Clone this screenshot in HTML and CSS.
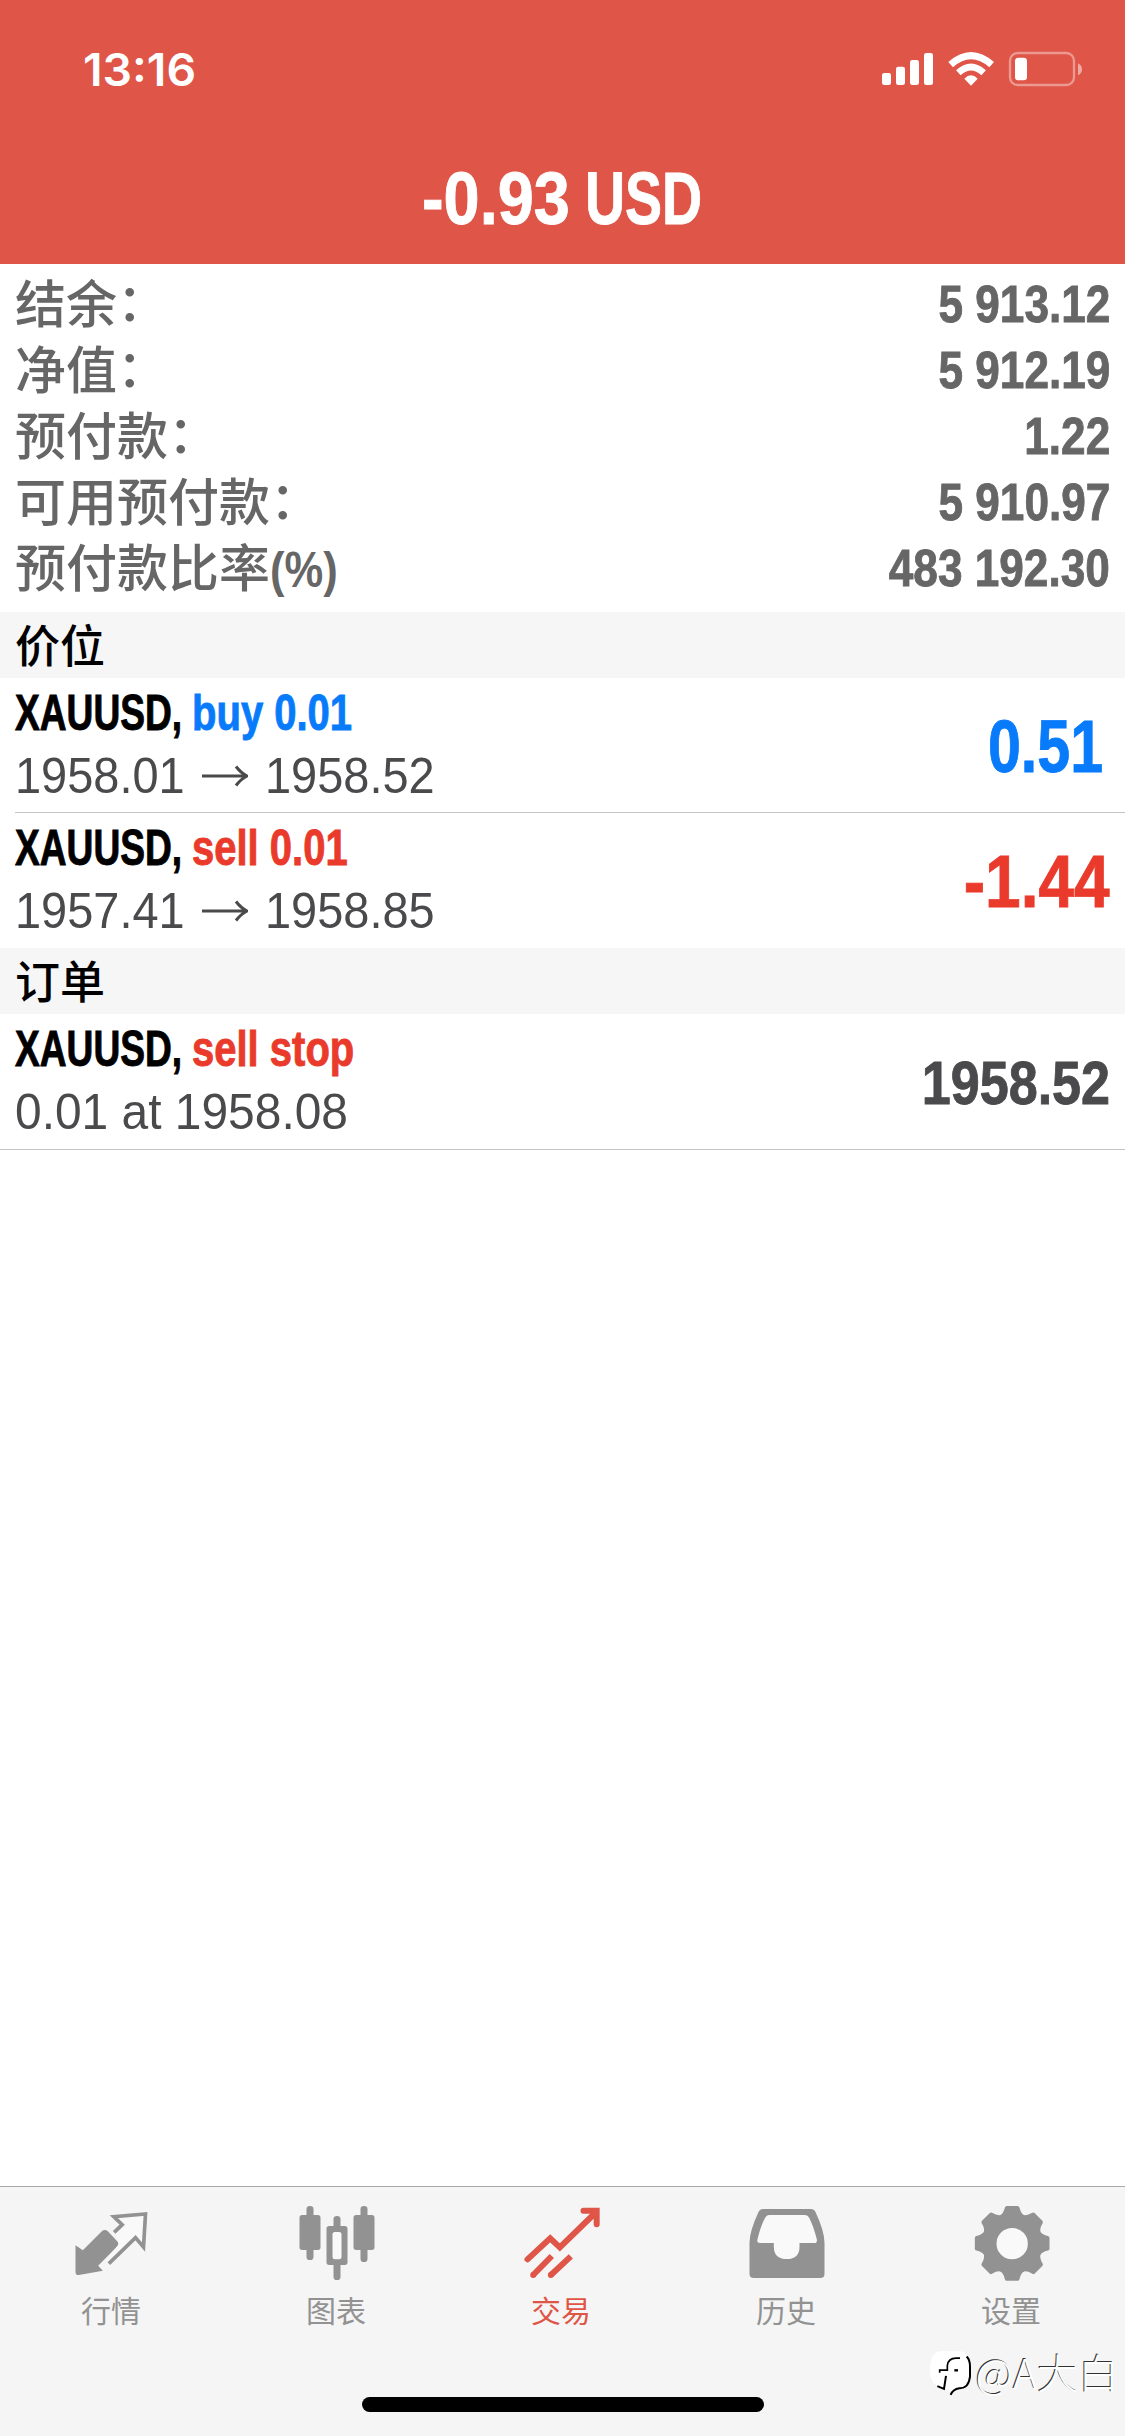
FILE: index.html
```html
<!DOCTYPE html>
<html lang="zh-CN">
<head>
<meta charset="utf-8">
<title>交易</title>
<link rel="stylesheet" href="styles.css">
</head>
<body>
<div class="app">
  <header class="header">
    <div class="status">
      <span class="time">13:16</span>
      <svg class="status-icons" viewBox="60 60 630 120" aria-hidden="true">
        <g fill="#fff">
          <rect x="66" y="129" width="27" height="36" rx="7"/>
          <rect x="108" y="110" width="27" height="55" rx="7"/>
          <rect x="150" y="90" width="27" height="75" rx="7"/>
          <rect x="192" y="69" width="27" height="96" rx="7"/>
          <path d="M333 167 L313 146 Q333 126 353 146 Z"/>
          <rect x="465" y="83" width="36" height="68" rx="10"/>
        </g>
        <g fill="none" stroke="#fff">
          <path d="M272 104 Q333 50 395 104" stroke-width="21"/>
          <path d="M295 128 Q333 94 371 128" stroke-width="20"/>
        </g>
        <rect x="450" y="69" width="192" height="96" rx="23" fill="none" stroke="#fff" stroke-opacity=".4" stroke-width="7"/>
        <path d="M654 100 Q666 106 666 118 Q666 130 654 136 Z" fill="#fff" fill-opacity=".5"/>
      </svg>
    </div>
    <h1 class="total"><span class="cond amount">-0.93</span><span class="cond currency">USD</span></h1>
  </header>

  <main class="content">
    <dl class="summary">
      <div class="line"><dt>结余<i>：</i></dt><dd class="cond">5 913.12</dd></div>
      <div class="line"><dt>净值<i>：</i></dt><dd class="cond">5 912.19</dd></div>
      <div class="line"><dt>预付款<i>：</i></dt><dd class="cond">1.22</dd></div>
      <div class="line"><dt>可用预付款<i>：</i></dt><dd class="cond">5 910.97</dd></div>
      <div class="line"><dt>预付款比率<span class="pct">(%)</span></dt><dd class="cond">483 192.30</dd></div>
    </dl>

    <h2 class="section">价位</h2>
    <article class="row first">
      <div class="info">
        <div class="name"><b class="symbol">XAUUSD,</b><b class="side buy">buy 0.01</b></div>
        <div class="prices"><span>1958.01</span><svg class="arrow" viewBox="0 0 46 22"><path d="M0 11H44M34 1.500Q39 8 45 11Q39 14 34 20.500"/></svg><span>1958.52</span></div>
      </div>
      <strong class="profit gain cond buy">0.51</strong>
    </article>
    <article class="row ruled">
      <div class="info">
        <div class="name"><b class="symbol">XAUUSD,</b><b class="side sell">sell 0.01</b></div>
        <div class="prices"><span>1957.41</span><svg class="arrow" viewBox="0 0 46 22"><path d="M0 11H44M34 1.500Q39 8 45 11Q39 14 34 20.500"/></svg><span>1958.85</span></div>
      </div>
      <strong class="profit loss cond sell">-1.44</strong>
    </article>

    <h2 class="section">订单</h2>
    <article class="row last">
      <div class="info">
        <div class="name"><b class="symbol">XAUUSD,</b><b class="side sell">sell stop</b></div>
        <div class="prices"><span class="order">0.01 at 1958.08</span></div>
      </div>
      <strong class="quote cond">1958.52</strong>
    </article>
  </main>

  <nav class="tabs">
    <a class="tab">
      <svg class="icon" viewBox="217.500 102 240 240">
        <path fill="currentColor" d="M225 226 L247 241 L304 184 Q313 176 322 184 L350 214 Q357 222 349 230 L293 287 L307 302 L235 315 Q225 316 225 305 Z"/>
        <path fill="#f9f9f9" d="M340 139 L436 131 L429 231 L405 203 L327 280 L317 270 L356 222 L344 190 L365 164 Z"/>
        <path fill="none" stroke="currentColor" stroke-width="11" d="M341 187 L365 164 L340 140 L435 132 L429 231 L405 203 L325 281"/>
      </svg>
      <span>行情</span>
    </a>
    <a class="tab">
      <svg class="icon" viewBox="892.500 102 240 240" fill="currentColor">
        <rect x="897" y="135" width="63" height="105" rx="8"/><rect x="918" y="108" width="21" height="162" rx="10"/>
        <rect x="1059" y="135" width="63" height="105" rx="8"/><rect x="1080" y="108" width="21" height="168" rx="10"/>
        <rect x="999" y="138" width="21" height="192" rx="10"/><rect x="978" y="168" width="63" height="117" rx="8"/>
        <rect x="996" y="186" width="27" height="82" rx="7" fill="#f9f9f9"/>
      </svg>
      <span>图表</span>
    </a>
    <a class="tab active">
      <svg class="icon" viewBox="367.500 102 240 240" fill="none" stroke="currentColor" stroke-width="18">
        <path stroke-linecap="round" d="M381 268 L449 205 L478 232 L584 129 M549 122 H588.500 V163"/>
        <path d="M398 315 L454 258 M451 315 L511 259"/>
        <g fill="currentColor" stroke="none"><circle cx="398" cy="315" r="9"/><circle cx="451" cy="315" r="9"/></g>
      </svg>
      <span>交易</span>
    </a>
    <a class="tab">
      <svg class="icon" viewBox="67.500 102 240 240">
        <path fill="currentColor" d="M113 117 H256 Q266 117 270 126 Q297 184 297 218 V311 Q297 324 284 324 H85 Q72 324 72 311 V218 Q72 184 99 126 Q103 117 113 117 Z"/>
        <path fill="#f9f9f9" d="M130 135 H239 Q247 135 251 143 Q264 168 274 208 Q276 219 266 219 H222 V230 Q222 267 184 267 Q145 267 145 230 V219 H104 Q93 219 96 208 Q105 168 119 143 Q123 135 130 135 Z"/>
      </svg>
      <span>历史</span>
    </a>
    <a class="tab">
      <svg class="icon" viewBox="742.500 102 240 240">
        <g fill="currentColor" stroke="currentColor" stroke-width="12" stroke-linejoin="round">
          <circle cx="860" cy="220" r="80"/>
          <path id="tooth" d="M826 142 Q839 135 844 114 H876 Q881 135 894 142 Z"/>
          <use href="#tooth" transform="rotate(45 860 220)"/><use href="#tooth" transform="rotate(90 860 220)"/>
          <use href="#tooth" transform="rotate(135 860 220)"/><use href="#tooth" transform="rotate(180 860 220)"/>
          <use href="#tooth" transform="rotate(225 860 220)"/><use href="#tooth" transform="rotate(270 860 220)"/>
          <use href="#tooth" transform="rotate(315 860 220)"/>
        </g>
        <circle cx="860" cy="221" r="47" fill="#f9f9f9"/>
      </svg>
      <span>设置</span>
    </a>
    <div class="home-bar"></div>
    <div class="watermark">
      <svg viewBox="612 548 126 140" aria-hidden="true">
        <path fill="#fff" d="M640 554 H705 Q733 560 733 600 V640 Q728 660 700 665 L674 685 L668 668 Q612 668 612 610 Q612 560 640 554 Z"/>
        <g fill="none" stroke="#000">
          <path stroke-width="5" d="M702 575 H690 Q667 575 664 597 V611 H641 V619"/>
          <path stroke-width="6" d="M660 628 L654 667 L634 659"/>
          <path stroke-width="6" d="M722 570 Q732 580 732 600 V630 Q728 666 700 665 Q680 668 674 685"/>
        </g>
        <rect x="685" y="608" width="11" height="7"/>
      </svg>
      <span>@A大白</span>
    </div>
  </nav>
</div>
</body>
</html>
```
FILE: styles.css
```css
* { box-sizing: border-box; margin: 0; padding: 0; }

body {
  width: 1125px;
  background: #fff;
  font-family: "Liberation Sans", "Noto Sans CJK SC", sans-serif;
}

.app {
  display: flex;
  flex-direction: column;
  height: 2436px;
  overflow: hidden;
}

/* Condensed bold numerals */
.cond {
  display: inline-block;
  font-weight: 700;
  white-space: nowrap;
  transform: scaleX(.841);
  transform-origin: 100% 50%;
  -webkit-text-stroke: .9px currentColor;
}

/* Header */
.header {
  height: 264px;
  background: #df5548;
  color: #fff;
}
.status {
  display: flex;
  justify-content: space-between;
  height: 136px;
  padding: 50px 35px 0 83px;
}
.time {
  font: 600 45px/40px Inter, sans-serif;
  transform: scaleX(1.03);
  transform-origin: 0 50%;
}
.status-icons { width: 210px; height: 40px; }
.total {
  display: flex;
  padding-left: 422px;
  font-size: 74.500px;
  line-height: 126px;
}
.total .cond { transform-origin: 0 50%; }
.total .amount { width: 163px; transform: scaleX(.87); }
.total .currency { transform: scaleX(.745); }

/* Account summary */
.summary { height: 348px; padding: 3px 15px 0; color: #666; }
.line {
  display: flex;
  justify-content: space-between;
  height: 66px;
}
.line dt {
  font: 500 51px/68px "Noto Sans CJK SC", sans-serif;
}
.line dt i {
  position: relative;
  top: -2px;
  font-style: normal;
}
.pct {
  display: inline-block;
  font: 700 50px/60px "Liberation Sans", sans-serif;
  transform: scaleX(.87);
  transform-origin: 0 50%;
}
.line dd {
  padding-top: 3px;
  font-size: 52.500px;
  line-height: 67px;
  height: 66px;
}

/* Lists */
.section {
  height: 66px;
  padding-left: 15px;
  background: #f6f6f6;
  color: #000;
  font: 500 45px/63px "Noto Sans CJK SC", sans-serif;
}
.row {
  display: flex;
  justify-content: space-between;
  height: 136px;
  padding-right: 15px;
}
.first { height: 134px; }
.info { display: flex; flex-direction: column; flex: 1; margin-left: 15px; }
.ruled { background: linear-gradient(#c4c4c6, #c4c4c6) 100% 0 / 1110px 1px no-repeat; }
.ruled .info { padding-top: 1px; }
.last { border-bottom: 1px solid #c4c4c6; }
.name {
  display: flex;
  height: 69px;
  font-size: 49.400px;
  line-height: 70px;
  white-space: nowrap;
}
.name b {
  transform: scaleX(.81);
  transform-origin: 0 50%;
  -webkit-text-stroke: .9px currentColor;
}
.name .symbol { width: 177px; color: #000; transform: scaleX(.752); }
.prices {
  display: flex;
  align-items: center;
  color: #4a4a4c;
  font-size: 49.400px;
  line-height: 58px;
  white-space: nowrap;
}
.prices span { transform: scaleX(.95); transform-origin: 0 50%; }
.prices span:first-child { width: 187px; }
.prices .order { transform: scaleX(.97); }
.arrow {
  width: 46px;
  height: 22px;
  margin-right: 17px;
  fill: none;
  stroke: currentColor;
  stroke-width: 3;
}
.buy { color: #087bfb; }
.sell { color: #e93a2b; }
.profit { font-size: 73.500px; line-height: 138px; }
.gain { margin-right: 7px; transform: scaleX(.805); }
.loss { line-height: 140px; transform: scaleX(.87); }
.quote { color: #4a4a4c; font-size: 62px; line-height: 138px; }

/* Tab bar */
.tabs {
  position: relative;
  display: flex;
  height: 250px;
  margin-top: auto;
  border-top: 1px solid #a9a9a9;
  background: #f5f5f5;
}
.content { flex: 1; }
.tab {
  display: flex;
  flex: 1;
  flex-direction: column;
  align-items: center;
  padding-top: 17px;
  color: #929292;
  font: 400 30px/44px "Noto Sans CJK SC", sans-serif;
}
.tab.active { color: #df5548; }
.icon { width: 80px; height: 80px; margin-bottom: 3px; }
.tab span { margin-left: -3px; }
.home-bar {
  position: absolute;
  left: 362px;
  bottom: 24px;
  width: 402px;
  height: 15px;
  border-radius: 8px;
  background: #000;
}
.watermark {
  position: absolute;
  right: 6px;
  bottom: 40px;
  display: flex;
  align-items: center;
  color: #fff;
  font: 300 41px/50px "Noto Sans CJK SC", sans-serif;
  text-shadow: -1px -1px 0 #333;
  white-space: nowrap;
}
.watermark svg { width: 42px; height: 47px; margin: 4px 4px 0 0; }
```
